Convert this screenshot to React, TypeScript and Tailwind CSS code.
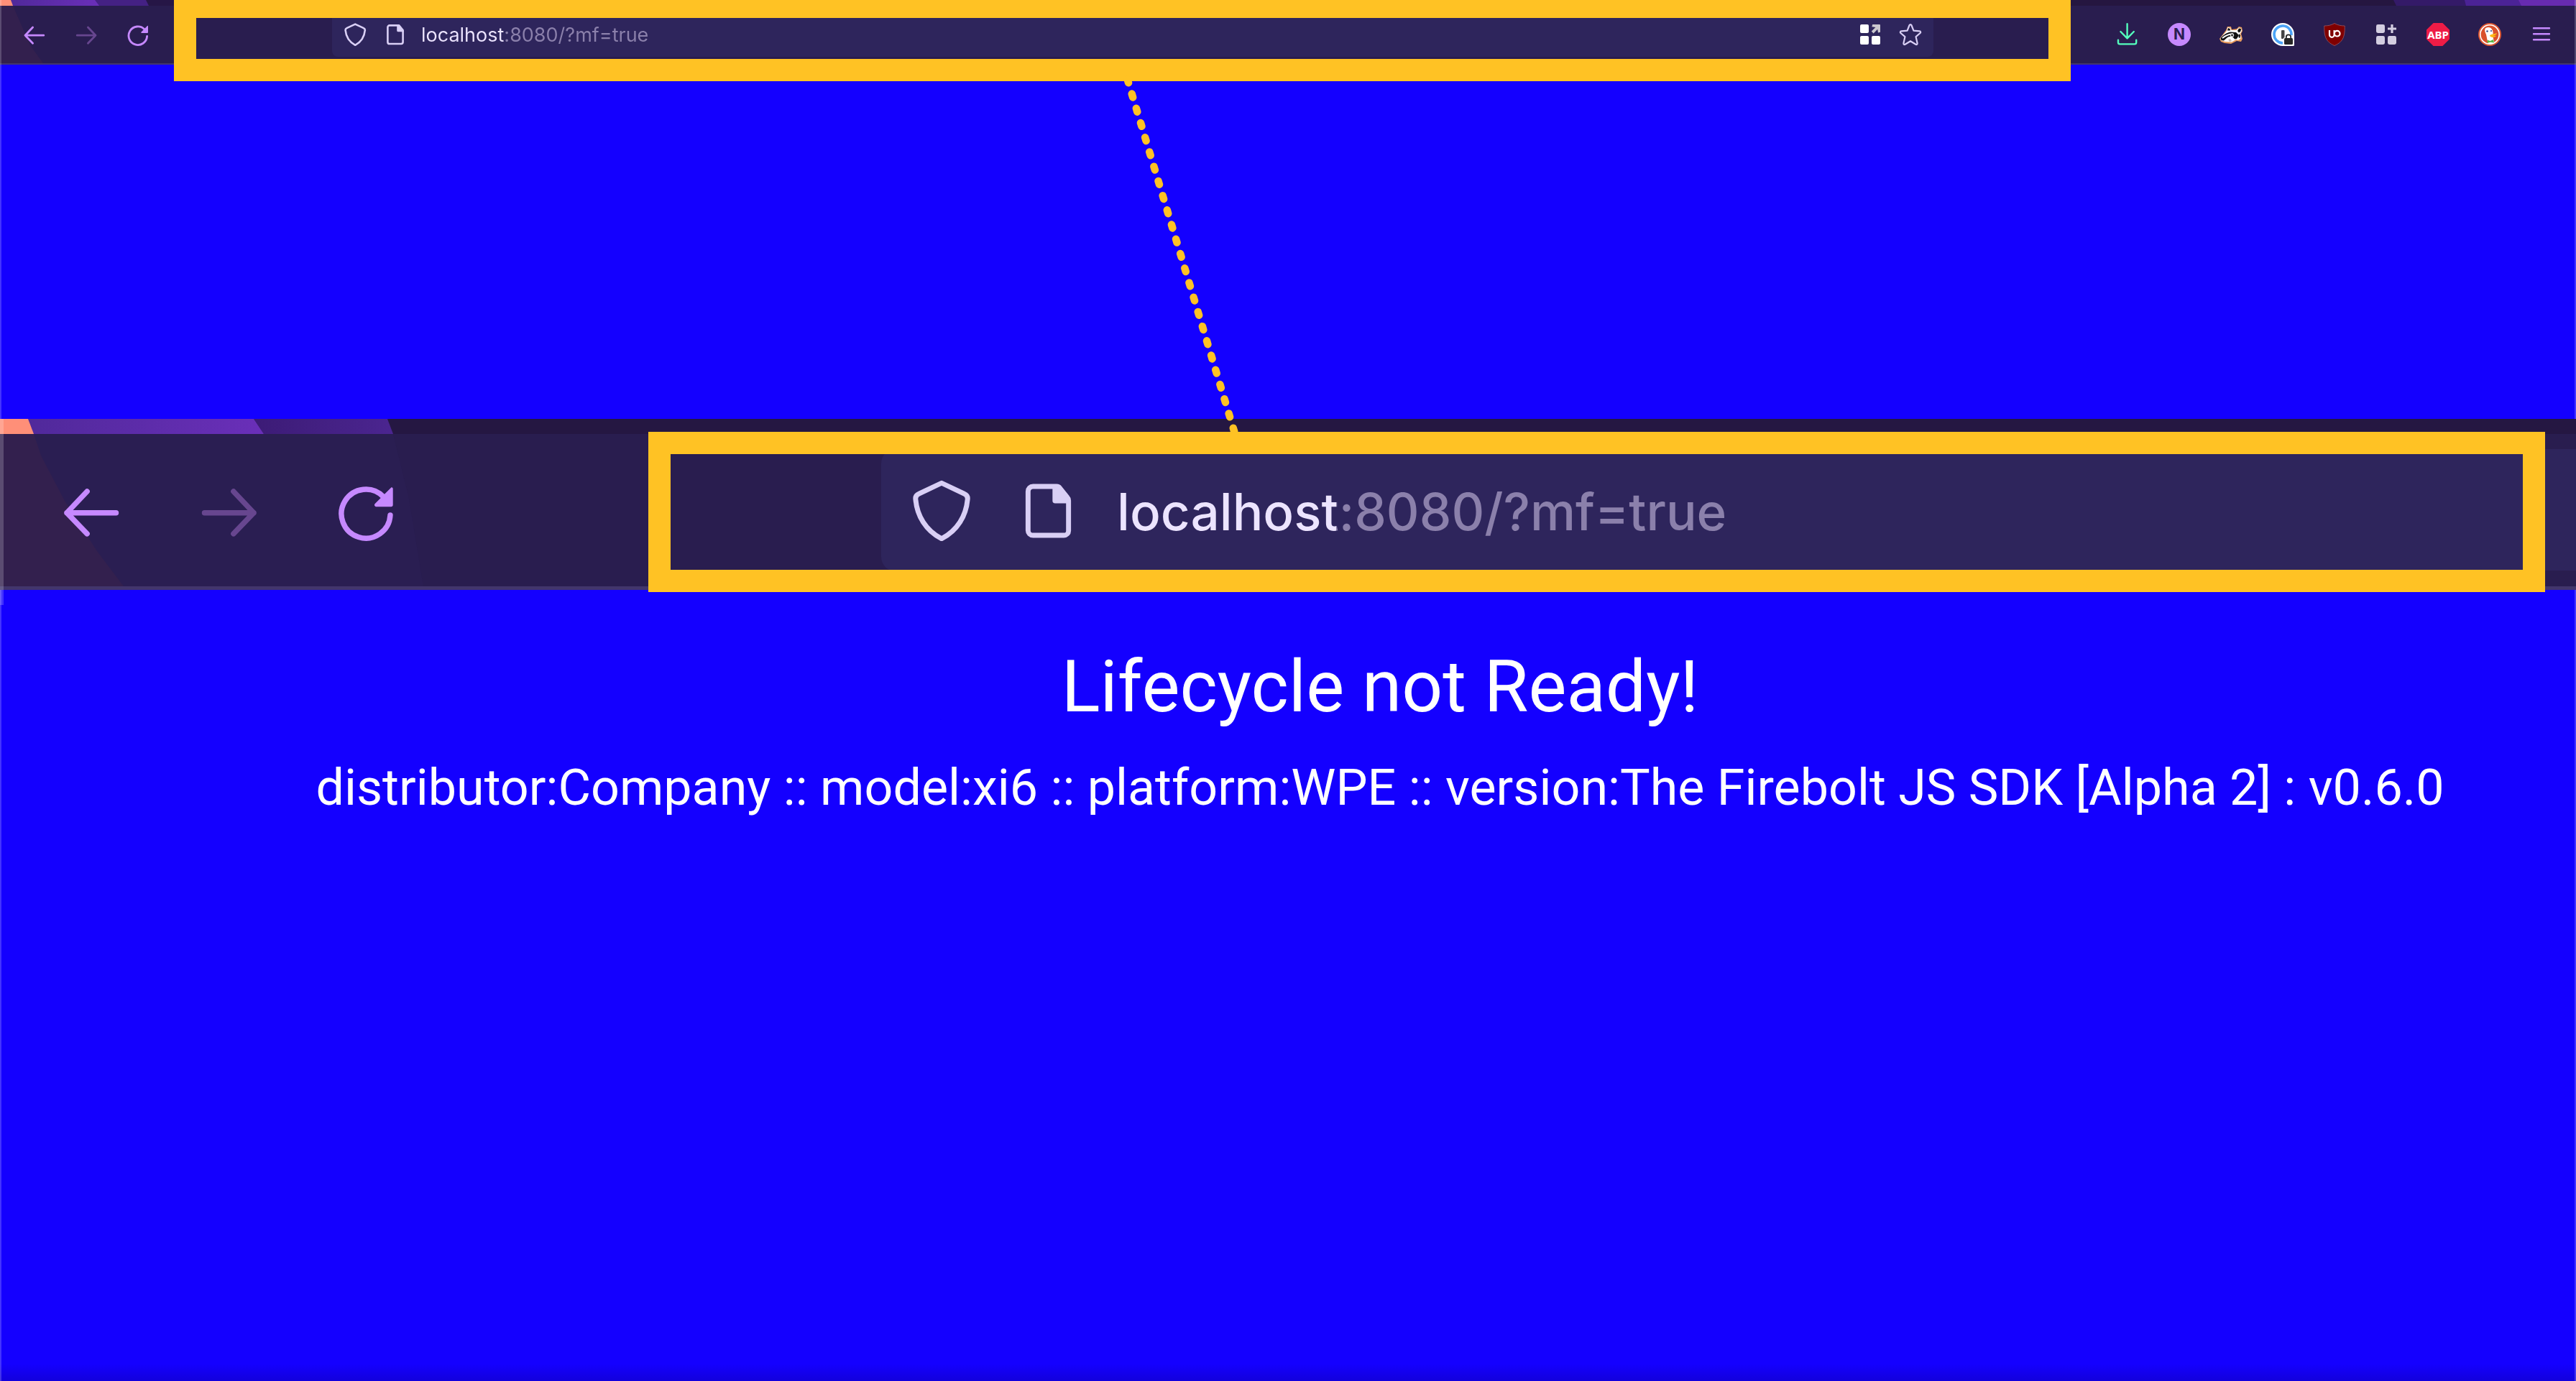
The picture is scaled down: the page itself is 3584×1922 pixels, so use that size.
import type { ReactNode } from "react";

type IconProps = { className?: string };

function BackIcon({ className }: IconProps) {
  return (
    <svg viewBox="0 0 16 16" className={className} fill="none" stroke="currentColor" strokeWidth="1.4" strokeLinecap="round" strokeLinejoin="round" aria-hidden="true">
      <path d="M6.8 3 1.5 8.600l5.300 5.500M1.500 8.600h12.900" />
    </svg>
  );
}

function ForwardIcon({ className }: IconProps) {
  return (
    <svg viewBox="0 0 16 16" className={className} fill="none" stroke="currentColor" strokeWidth="1.4" strokeLinecap="round" strokeLinejoin="round" aria-hidden="true">
      <path d="m9.200 3 5.300 5.600-5.300 5.500M14.500 8.600H1.600" />
    </svg>
  );
}

function ReloadIcon({ className }: IconProps) {
  return (
    <svg viewBox="0 0 16 16" className={className} aria-hidden="true">
      <path d="M14.300 9.200A6.400 6.400 0 1 1 12.500 4.400" fill="none" stroke="currentColor" strokeWidth="1.4" strokeLinecap="round" />
      <path d="M15 2.300V6.500a.5.5 0 0 1-.5.5H10.700c-.5 0-.7-.5-.4-.8L14.500 2c.2-.2.5 0 .5.300z" fill="currentColor" />
    </svg>
  );
}

function ShieldIcon({ className }: IconProps) {
  return (
    <svg viewBox="0 0 16 16" className={className} fill="none" stroke="currentColor" strokeWidth="1.3" strokeLinejoin="round" aria-hidden="true">
      <path d="M8.1.8 14 3.6c.7.3 1 .8.9 1.5-.4 4.3-2.6 8.1-6.8 10.3C3.9 13.200 1.700 9.400 1.300 5.100c-.1-.7.2-1.2.9-1.500z" />
    </svg>
  );
}

function PageIcon({ className }: IconProps) {
  return (
    <svg viewBox="0 0 16 16" className={className} aria-hidden="true">
      <path d="M4 1.700h6.200c.3 0 .6.100.800.400l2 2.500c.2.200.3.500.3.800v7.900a1.200 1.200 0 0 1-1.200 1.200H4a1.300 1.300 0 0 1-1.300-1.300V3A1.300 1.300 0 0 1 4 1.700z" fill="none" stroke="currentColor" strokeWidth="1.3" />
      <path d="M9.100 1.300h1.500L13.900 5.300v.800H9.800a.7.7 0 0 1-.7-.7z" fill="currentColor" />
    </svg>
  );
}

function TilesIcon({ className }: IconProps) {
  return (
    <svg viewBox="0 0 16 16" className={className} fill="#fff" aria-hidden="true">
      <rect x="1" y="1" width="6" height="6" rx="1" />
      <rect x="1" y="9" width="6" height="6" rx="1" />
      <rect x="9" y="9" width="6" height="6" rx="1" />
      <path d="M9.600 1H14.500a.5.5 0 0 1 .5.5V6.400L13.500 6.800 13.100 4.400 10.300 7.200 8.900 5.800 11.700 3 9.200 2.600z" fill="#cbc8cf" />
    </svg>
  );
}

function StarIcon({ className }: IconProps) {
  return (
    <svg viewBox="0 0 16 16" className={className} fill="none" stroke="currentColor" strokeWidth="1.100" strokeLinejoin="round" aria-hidden="true">
      <path d="M7.300 1.500c.3-.6 1.100-.6 1.400 0L10.200 5.300l4.200.4c.7.100.9.900.4 1.300L11.800 9.600l1 4.500c.1.700-.5 1.100-1.100.8L8 12.600l-3.700 2.300c-.6.3-1.200-.1-1.100-.8l1-4.500L1.200 7c-.5-.4-.3-1.200.4-1.300l4.200-.4z" />
    </svg>
  );
}

function DownloadIcon() {
  return (
    <svg viewBox="0 0 16 16" className="size-8" fill="none" stroke="#54ffbd" strokeWidth="1.200" strokeLinecap="round" strokeLinejoin="round" aria-hidden="true">
      <path d="M7.800.6v9.900M3.200 6l4.600 4.700L12.400 6M1.500 11.800v1.700c0 .7.500 1.200 1.200 1.200h10.200c.7 0 1.200-.5 1.200-1.200v-1.700" />
    </svg>
  );
}

function BadgerIcon() {
  return (
    <svg viewBox="0 0 32 32" className="size-8" aria-hidden="true">
      <path d="M0 22 9 10 11 5l5 0 1 4 7-1 3-3 4 1 1 5-2 4 2 7-2 4-6-1-8 4-9-1-5-2z" fill="#e79a5c" />
      <path d="M1 21.500 10 11l1.500-5 3.500 1 1.500 3 7 0 3.500-3.500 3 1L31 11l-2.500 4 1.500 6-4 3-3-1-6 3.500-9-.5-5-1.500z" fill="#fff" />
      <path d="M1.500 21C6 16.500 10 13 16 12.500l7 .5 4 4-3 5-3 .5c-2-4-6-5-10-2.500l-5 4.500-3.500-.5z" fill="#111" />
      <path d="M11 10.500 12 7l2.500 1 .5 2.500zM25 11l2-3.500 3 .5-.5 3.500-2.500 2zM27 15l2 2-.5 4-2-1z" fill="#111" />
      <path d="M4 21C9 17 13 15 19 15.500" stroke="#fff" strokeWidth="2" fill="none" />
      <circle cx="17.500" cy="17" r="2.700" fill="#ddd" />
      <circle cx="17.500" cy="17" r="1.300" fill="#111" />
      <path d="M12 23l3-1 2 3-3 1z" fill="#c9b9b4" />
    </svg>
  );
}

function PasswordIcon() {
  return (
    <svg viewBox="0 0 32 32" className="size-8" aria-hidden="true">
      <path d="M16 0a16 16 0 0 1 16 16v14.500a1.500 1.500 0 0 1-1.500 1.500H16A16 16 0 0 1 16 0z" fill="#fff" />
      <path d="M16 28A12 12 0 1 1 28 17" fill="none" stroke="#4ba3f7" strokeWidth="3.600" />
      <rect x="14" y="10" width="4.500" height="12" rx="1" fill="#444" />
      <rect x="17.500" y="21" width="13" height="10" rx="2" fill="#fff" stroke="#fff" strokeWidth="2" />
      <rect x="18" y="21" width="12" height="9" rx="1.500" fill="#262626" />
      <path d="M20.800 21.500v-2a3.200 3.200 0 0 1 6.400 0v2" fill="none" stroke="#262626" strokeWidth="1.800" />
    </svg>
  );
}

function UblockIcon() {
  return (
    <svg viewBox="0 0 32 32" className="size-8" aria-hidden="true">
      <path d="M16 .5C11.500 3 7 4 1.800 4 1.500 17 3 26 16 31.500 29 26 30.500 17 30.200 4 25 4 20.500 3 16 .5z" fill="#800000" stroke="#8b4a5a" strokeWidth="1" />
      <path d="M9 10v6.500a3.300 3.300 0 0 0 6.600 0V10" fill="none" stroke="#fff" strokeWidth="2.200" />
      <circle cx="19.700" cy="14.700" r="3.800" fill="none" stroke="#fff" strokeWidth="2.200" />
    </svg>
  );
}

function ExtensionsIcon() {
  return (
    <svg viewBox="0 0 16 16" className="size-8" fill="#d3cde0" aria-hidden="true">
      <rect x="1" y="1" width="6" height="6" rx="1.200" />
      <rect x="1" y="9" width="6" height="6" rx="1.200" />
      <rect x="9" y="9" width="6" height="6" rx="1.200" />
      <path d="M11.200 1h1.600v2.200H15v1.600h-2.200V7h-1.600V4.800H9V3.200h2.200z" />
    </svg>
  );
}

function DuckIcon() {
  return (
    <svg viewBox="0 0 32 32" className="size-8" aria-hidden="true">
      <circle cx="16" cy="16" r="16" fill="#de5833" />
      <circle cx="16" cy="16" r="13.200" fill="#d9512c" stroke="#fff" strokeWidth="1.600" />
      <path d="M9.500 8c2.500-3 8.500-2.800 10.500 2.500 1 3 .5 6 .5 9l2 8.800c-3 1.200-6 1.200-9 .2L11 16c-1.500-3-2.500-5.500-1.500-8z" fill="#fff" />
      <circle cx="12.500" cy="11.500" r="1.300" fill="#2d4f8e" />
      <circle cx="18" cy="11" r="1.100" fill="#2d4f8e" />
      <path d="M17 16.500c2.500-1.500 6-1.500 9-2.300-.2 2-3.500 3-5.500 3.300 1.500.5 3.500.3 4.500.2-1.500 2.500-5.500 2.800-8 1.300-1.300-.8-1.200-1.800 0-2.500z" fill="#fdb813" />
      <path d="M12.500 23.500l4 1.500 4.500-2 1 4.500-5-.8-4 1z" fill="#5bb947" />
    </svg>
  );
}

function MenuIcon() {
  return (
    <svg viewBox="0 0 32 32" className="size-8" stroke="#c689ff" strokeWidth="2.400" strokeLinecap="round" aria-hidden="true">
      <path d="M5 7.200h22M5 15.200h22M5 23.200h22" />
    </svg>
  );
}

function ToolButton({ label, children }: { label: string; children: ReactNode }) {
  return (
    <button type="button" aria-label={label} className="flex size-8 shrink-0 items-center justify-center">
      {children}
    </button>
  );
}

function BrowserBar() {
  return (
    <header className="relative flex h-[90px] items-start bg-[#291d4f]">
      <div className="absolute inset-0 border-b-2 border-[#42356c]">
        <svg className="absolute top-0 left-0 h-[88px] w-[242px]" viewBox="0 0 242 88" preserveAspectRatio="none" aria-hidden="true">
          <defs>
            <linearGradient id="barGlow" x1="0" x2="1">
              <stop offset="0" stopColor="#4d2897" />
              <stop offset="1" stopColor="#6a2fb9" />
            </linearGradient>
          </defs>
          <path d="M0 0h242v8H0z" fill="#261646" />
          <path d="M0 0h203l4 8H0z" fill="#442184" />
          <path d="M0 0h132l6 8H0z" fill="url(#barGlow)" />
          <path d="M0 0h15l3 8H0z" fill="#ff8f78" />
          <path d="M0 8h18l24 55 18 25H0z" fill="#33204e" />
        </svg>
        <svg className="absolute top-0 right-0 h-2 w-[704px]" viewBox="0 0 704 8" preserveAspectRatio="none" aria-hidden="true">
          <path d="M0 0h704v8H0z" fill="#251640" />
          <path d="M450 0h254v8H454z" fill="#341a68" />
          <path d="M549 0h155v8H551z" fill="#4b2396" />
          <path d="M624 0h80v8H628z" fill="#672bb0" />
        </svg>
      </div>
      <nav className="relative mt-2 flex h-20 items-center gap-10 pl-8 text-[#c689ff]">
        <ToolButton label="Back"><BackIcon className="size-8" /></ToolButton>
        <ToolButton label="Forward"><ForwardIcon className="size-8 text-[#67468f]" /></ToolButton>
        <ToolButton label="Reload"><ReloadIcon className="size-8" /></ToolButton>
      </nav>
      <div className="relative z-10 mr-[63px] ml-[34px] h-[113px] min-w-0 flex-1 overflow-hidden border-[31px] border-t-[25px] border-[#ffc224] bg-[#291d4f]">
        <div className="-mt-2 mr-40 ml-[189px] flex h-[62px] items-center rounded-lg bg-[#2e255c] px-4 text-[#d9cff5]">
          <ShieldIcon className="size-8 shrink-0" />
          <PageIcon className="ml-6 size-8 shrink-0" />
          <input
            type="text"
            aria-label="Address"
            defaultValue="localhost:8080/?mf=true"
            className="ml-5 h-10 min-w-0 flex-1 bg-[linear-gradient(90deg,#ece4ff_115px,#8b80ab_115px)] bg-clip-text pt-0.5 font-['Inter',sans-serif] text-[27px] text-transparent outline-none"
          />
          <div className="flex gap-6">
            <ToolButton label="Open in container"><TilesIcon className="size-8" /></ToolButton>
            <ToolButton label="Bookmark this page"><StarIcon className="size-8" /></ToolButton>
          </div>
        </div>
      </div>
      <div className="relative mt-2 flex h-20 items-center gap-10 pr-8">
        <ToolButton label="Downloads"><DownloadIcon /></ToolButton>
        <button type="button" className="size-8 rounded-full bg-[#c689ff] font-['Inter',sans-serif] text-[21px] leading-8 font-bold text-[#2b1d52]">N</button>
        <ToolButton label="Privacy Badger"><BadgerIcon /></ToolButton>
        <ToolButton label="Password manager"><PasswordIcon /></ToolButton>
        <ToolButton label="Content blocker"><UblockIcon /></ToolButton>
        <ToolButton label="Extensions"><ExtensionsIcon /></ToolButton>
        <button type="button" className="flex size-8 items-center justify-center bg-[#ee1c46] font-['Noto_Sans',sans-serif] text-[15px] font-bold text-white [clip-path:polygon(30%_0,70%_0,100%_30%,100%_70%,70%_100%,30%_100%,0_70%,0_30%)]">ABP</button>
        <ToolButton label="Search privacy"><DuckIcon /></ToolButton>
        <ToolButton label="Menu"><MenuIcon /></ToolButton>
      </div>
    </header>
  );
}

function MagnifiedBar() {
  return (
    <section aria-label="Magnified address bar" className="relative z-10 flex h-[238px] items-start bg-[#291d4f]">
      <div className="absolute inset-0 border-t-[21px] border-b-[5px] border-t-[#251742] border-b-[#42356c]">
        <div className="absolute top-[21px] right-0 bottom-[22px] w-16 bg-[#2e255c]" />
      </div>
      <svg className="absolute top-0 left-0 h-[233px] w-[640px]" viewBox="0 0 640 233" preserveAspectRatio="none" aria-hidden="true">
        <defs>
          <linearGradient id="zoomGlow" x1="0" x2="1">
            <stop offset="0" stopColor="#4d2897" />
            <stop offset="1" stopColor="#6a2fb9" />
          </linearGradient>
          <linearGradient id="zoomShade" x1="0" x2="1">
            <stop offset="0" stopColor="#3c1b76" />
            <stop offset="1" stopColor="#4b2590" />
          </linearGradient>
        </defs>
        <path d="M0 21h547l22 90 20 122H0z" fill="#2a1e52" />
        <path d="M353 0h186l8 21H367z" fill="url(#zoomShade)" />
        <path d="M0 0h353l14 21H0z" fill="url(#zoomGlow)" />
        <path d="M0 0h39l8 21H0z" fill="#ff8f78" />
        <path d="M0 21h47l10 30 33 63 45 70 37 49H0z" fill="#33204e" />
      </svg>
      <div className="absolute top-0 left-0 h-[259px] w-[5px] bg-white/20" />
      <nav className="relative mt-[21px] flex h-[212px] items-center gap-[106px] pl-[85px] text-[#c689ff]">
        <button type="button" aria-label="Back"><BackIcon className="size-[85px]" /></button>
        <button type="button" aria-label="Forward"><ForwardIcon className="size-[85px] text-[#67468f]" /></button>
        <button type="button" aria-label="Reload"><ReloadIcon className="size-[85px]" /></button>
      </nav>
      <div className="relative mt-[18px] mr-[43px] ml-[350px] h-[223px] min-w-0 flex-1 overflow-hidden border-[31px] border-[#ffc224] bg-[#291d4f]">
        <div className="-mt-[7px] ml-[293px] flex h-[170px] items-center rounded-l-[20px] bg-[#2e255c] pl-[41px] text-[#d9cff5]">
          <ShieldIcon className="size-[85px] shrink-0" />
          <PageIcon className="ml-16 size-[85px] shrink-0" />
          <input
            type="text"
            aria-label="Magnified address"
            defaultValue="localhost:8080/?mf=true"
            className="ml-[53px] h-[110px] min-w-0 flex-1 bg-[linear-gradient(90deg,#ece4ff_305px,#8b80ab_305px)] bg-clip-text pt-1 font-['Inter',sans-serif] text-[71px] font-medium text-transparent outline-none"
          />
        </div>
      </div>
    </section>
  );
}

export default function App() {
  return (
    <div className="relative flex min-h-screen flex-col overflow-hidden bg-[#1400ff]">
      <BrowserBar />
      <div className="h-[493px]" />
      <MagnifiedBar />
      <main className="flex-1 bg-linear-to-t from-[#1200dc] to-[#1400ff] to-[24px] pt-[75px] pl-64 text-center font-['Roboto',sans-serif] whitespace-nowrap text-white">
        <h1 className="text-[100px] leading-[120px]">Lifecycle not Ready!</h1>
        <p className="mt-9 text-[70px] leading-[88px]">
          distributor:Company :: model:xi6 :: platform:WPE :: version:The Firebolt JS SDK [Alpha 2] : v0.6.0
        </p>
      </main>
      <svg className="absolute top-[100px] left-[1560px] z-20 h-[510px] w-[180px]" viewBox="1560 100 180 510" aria-hidden="true">
        <path d="M1568.600 110.400 1718 603" stroke="#ffc224" strokeWidth="10.500" strokeLinecap="round" strokeDasharray="5 16.130" fill="none" />
      </svg>
      <div className="absolute inset-y-0 left-0 w-0.5 bg-white/20" />
      <div className="absolute inset-y-0 right-0 w-0.5 bg-white/20" />
    </div>
  );
}
